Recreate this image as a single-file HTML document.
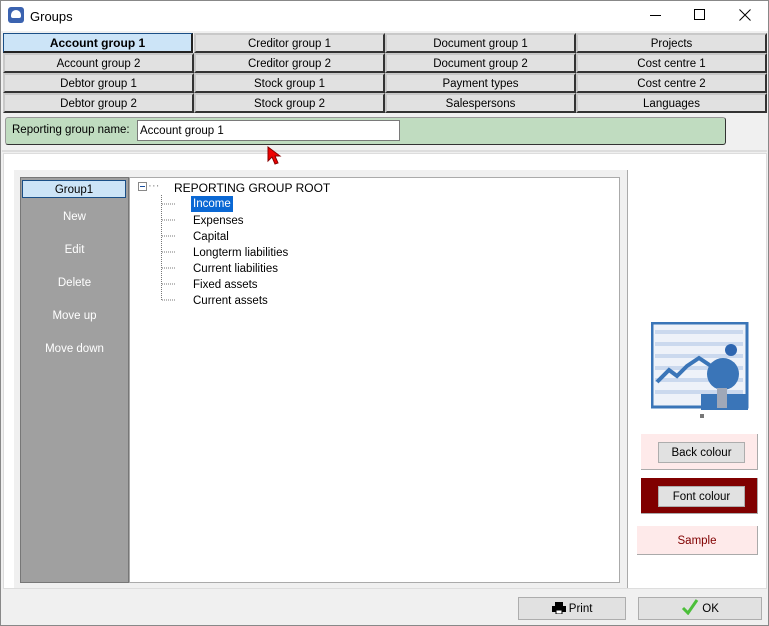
<!DOCTYPE html><html><head><style>
*{box-sizing:border-box;margin:0;padding:0}
body{width:769px;height:626px;background:#f0f0f0;font-family:"Liberation Sans",sans-serif;font-size:11.5px;position:relative;overflow:hidden}
.a{position:absolute}
.tb{background:#e1e1e1;border:2px solid #c8c8c8;border-right-color:#333;border-bottom-color:#333;text-align:center;line-height:18px;font-size:11.5px;color:#000}
.btn{background:#e1e1e1;border:1px solid #adadad;text-align:center;font-size:11.5px}
.tree div{position:absolute;font-size:11.5px;line-height:16px}
.lf{color:#fff;text-align:center;width:107px;left:0;font-size:11.5px}
</style></head><body>
<div class="a" style="left:0;top:0;width:769px;height:626px;border:1px solid #888"></div>
<div class="a" style="left:1px;top:1px;width:767px;height:30px;background:#fff"></div>
<div class="a" style="left:8px;top:7px;width:16px;height:16px;background:#3b63b0;border-radius:3px"><div class="a" style="left:3px;top:3px;width:10px;height:8px;background:#fff;border-radius:5px 5px 2px 2px"></div></div>
<div class="a" style="left:30px;top:9px;font-size:13px">Groups</div>
<div class="a" style="left:650px;top:15px;width:11px;height:1px;background:#000"></div>
<div class="a" style="left:694px;top:9px;width:11px;height:11px;border:1px solid #000"></div>
<svg class="a" style="left:739px;top:9px" width="12" height="12"><path d="M0.5 0.5 L11.5 11.5 M11.5 0.5 L0.5 11.5" stroke="#000" stroke-width="1"/></svg>

<div class="a tb" style="left:3px;top:33px;width:190px;height:20px;background:#cce4f7;border:1px solid #1a4f87;border-right:2px solid #222;border-bottom:2px solid #222;font-weight:bold;font-size:12px;line-height:19px">Account group 1</div>
<div class="a tb" style="left:194px;top:33px;width:191px;height:20px">Creditor group 1</div>
<div class="a tb" style="left:385px;top:33px;width:191px;height:20px">Document group 1</div>
<div class="a tb" style="left:576px;top:33px;width:191px;height:20px">Projects</div>
<div class="a tb" style="left:3px;top:53px;width:191px;height:20px">Account group 2</div>
<div class="a tb" style="left:194px;top:53px;width:191px;height:20px">Creditor group 2</div>
<div class="a tb" style="left:385px;top:53px;width:191px;height:20px">Document group 2</div>
<div class="a tb" style="left:576px;top:53px;width:191px;height:20px">Cost centre 1</div>
<div class="a tb" style="left:3px;top:73px;width:191px;height:20px">Debtor group 1</div>
<div class="a tb" style="left:194px;top:73px;width:191px;height:20px">Stock group 1</div>
<div class="a tb" style="left:385px;top:73px;width:191px;height:20px">Payment types</div>
<div class="a tb" style="left:576px;top:73px;width:191px;height:20px">Cost centre 2</div>
<div class="a tb" style="left:3px;top:93px;width:191px;height:20px">Debtor group 2</div>
<div class="a tb" style="left:194px;top:93px;width:191px;height:20px">Stock group 2</div>
<div class="a tb" style="left:385px;top:93px;width:191px;height:20px">Salespersons</div>
<div class="a tb" style="left:576px;top:93px;width:191px;height:20px">Languages</div>

<div class="a" style="left:5px;top:117px;width:721px;height:28px;background:#c0dcc0;border:1px solid #333;border-top-color:#999;border-left-color:#999;border-radius:3px"></div>
<div class="a" style="left:12px;top:124px">Reporting group name:</div>
<div class="a" style="left:137px;top:120px;width:263px;height:21px;background:#fff;border:1px solid #7a7a7a;padding:4px 2px">Account group 1</div>

<div class="a" style="left:2px;top:150px;width:765px;height:2px;background:#ddd"></div>
<div class="a" style="left:3px;top:153px;width:764px;height:436px;background:#fff;border:1px solid #ddd"></div>
<div class="a" style="left:14px;top:170px;width:614px;height:418px;background:#f0f0f0;border-right:1px solid #aaa"></div>
<svg class="a" style="left:267px;top:146px" width="16" height="20"><path d="M1 1 L1 15 L5 11 L8 18 L11 17 L8 10 L13 10 Z" fill="#e00" stroke="#800" stroke-width="1"/></svg>
<div class="a" style="left:20px;top:177px;width:109px;height:406px;background:#a0a0a0;border:1px solid #777"></div>
<div class="a" style="left:22px;top:180px;width:104px;height:18px;background:#cce4f7;border:1px solid #1a4f87;text-align:center;line-height:19px">Group1</div>
<div class="a lf" style="left:21px;top:211px">New</div>
<div class="a lf" style="left:21px;top:244px">Edit</div>
<div class="a lf" style="left:21px;top:277px">Delete</div>
<div class="a lf" style="left:21px;top:310px">Move up</div>
<div class="a lf" style="left:21px;top:343px">Move down</div>
<div class="a" style="left:129px;top:177px;width:491px;height:406px;background:#fff;border:1px solid #aaa"></div>
<div class="tree">
<div class="a" style="left:138px;top:182px;width:9px;height:9px;border:1px solid #888;"><div class="a" style="left:1px;top:3px;width:5px;height:1px;background:#1a4f9f"></div></div>
<div style="left:148px;top:178px;color:#888">···</div>
<div style="left:174px;top:180px;font-size:12px">REPORTING GROUP ROOT</div>
<div style="left:191px;top:196px;background:#0a68d4;color:#fff;padding:1px 2px 0;height:16px;line-height:15px">Income</div>
<div style="left:193px;top:213px">Expenses</div>
<div style="left:193px;top:229px">Capital</div>
<div style="left:193px;top:245px">Longterm liabilities</div>
<div style="left:193px;top:261px">Current liabilities</div>
<div style="left:193px;top:277px">Fixed assets</div>
<div style="left:193px;top:293px">Current assets</div>
</div>
<svg class="a" style="left:161px;top:195px" width="20" height="110"><g stroke="#777" stroke-dasharray="1 1"><line x1="0.5" y1="0" x2="0.5" y2="105"/><line x1="1" y1="9" x2="14" y2="9"/><line x1="1" y1="25" x2="14" y2="25"/><line x1="1" y1="41" x2="14" y2="41"/><line x1="1" y1="57" x2="14" y2="57"/><line x1="1" y1="73" x2="14" y2="73"/><line x1="1" y1="89" x2="14" y2="89"/><line x1="1" y1="105" x2="14" y2="105"/></g></svg>

<svg class="a" style="left:651px;top:322px" width="98" height="98">
<rect x="1" y="1" width="95" height="84" fill="#eef2f9" stroke="#3a75b8" stroke-width="3"/>
<g fill="#cbd9ee"><rect x="4" y="8" width="88" height="4"/><rect x="4" y="20" width="88" height="4"/><rect x="4" y="32" width="88" height="4"/><rect x="4" y="44" width="88" height="4"/><rect x="4" y="56" width="88" height="4"/><rect x="4" y="68" width="88" height="4"/></g>
<polyline points="6,60 18,48 26,54 36,44 48,36 60,44" fill="none" stroke="#3a75b8" stroke-width="4"/>
<circle cx="72" cy="52" r="16" fill="#3a75b8"/>
<circle cx="80" cy="28" r="6" fill="#2e66b0"/>
<rect x="50" y="72" width="47" height="16" fill="#3a75b8"/>
<rect x="66" y="66" width="10" height="20" fill="#a0a8b8"/>
<rect x="49" y="92" width="4" height="4" fill="#777"/>
</svg>

<div class="a" style="left:641px;top:434px;width:117px;height:36px;background:#feeaea;border-right:1px solid #aaa;border-bottom:1px solid #aaa"></div>
<div class="a btn" style="left:658px;top:442px;width:87px;height:21px;line-height:21px">Back colour</div>
<div class="a" style="left:641px;top:478px;width:117px;height:36px;background:#800000;border-right:1px solid #aaa;border-bottom:1px solid #aaa"></div>
<div class="a btn" style="left:658px;top:486px;width:87px;height:21px;line-height:21px">Font colour</div>
<div class="a" style="left:637px;top:526px;width:121px;height:29px;background:#feeaea;border-right:1px solid #aaa;border-bottom:1px solid #aaa;color:#800000;text-align:center;line-height:30px">Sample</div>

<div class="a btn" style="left:518px;top:597px;width:108px;height:23px;line-height:23px"><svg width="14" height="12" style="vertical-align:-2px"><rect x="3" y="0" width="8" height="4" fill="#000"/><rect x="0" y="4" width="14" height="6" fill="#000"/><rect x="4" y="8" width="6" height="4" fill="#fff" stroke="#000"/></svg> Print</div>
<div class="a btn" style="left:638px;top:597px;width:124px;height:23px;line-height:23px"><svg width="18" height="16" style="vertical-align:-3px"><path d="M2 9 L7 14 L16 1" fill="none" stroke="#4cbf3a" stroke-width="3"/></svg> OK</div>
</body></html>
